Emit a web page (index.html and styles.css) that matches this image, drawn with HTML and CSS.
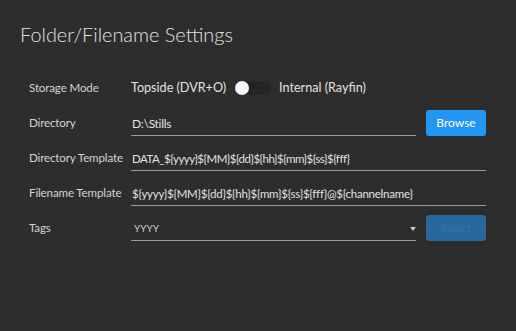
FILE: index.html
```
<!DOCTYPE html>
<html>
<head>
<meta charset="utf-8">
<link rel="stylesheet" href="styles.css">
</head>
<body>
<div class="page">
  <h1 class="title">Folder/Filename Settings</h1>
  <div class="form">
    <div class="row">
      <div class="label">Storage Mode</div>
      <div class="value mode">
        <span>Topside (DVR+O)</span>
        <span class="toggle"><span class="knob"></span></span>
        <span>Internal (Rayfin)</span>
      </div>
    </div>
    <div class="row">
      <div class="label">Directory</div>
      <div class="value">
        <div class="field short"><span class="dir">D:\Stills</span></div>
        <button class="btn">Browse</button>
      </div>
    </div>
    <div class="row">
      <div class="label">Directory Template</div>
      <div class="value">
        <div class="field wide"><span class="tpl t1">DATA_${yyyy}${MM}${dd}${hh}${mm}${ss}${fff}</span></div>
      </div>
    </div>
    <div class="row">
      <div class="label">Filename Template</div>
      <div class="value">
        <div class="field wide"><span class="tpl t2">${yyyy}${MM}${dd}${hh}${mm}${ss}${fff}@${channelname}</span></div>
      </div>
    </div>
    <div class="row">
      <div class="label">Tags</div>
      <div class="value">
        <div class="field short select"><span class="small">YYYY</span><span class="arrow"></span></div>
        <button class="btn disabled">Insert</button>
      </div>
    </div>
  </div>
</div>
</body>
</html>
```
FILE: styles.css
```
html, body {
  margin: 0;
  padding: 0;
  background: #2d2d2d;
  height: 100%;
}
body {
  font-family: Lato, "Noto Sans", sans-serif;
  color: #dcdcdc;
}
.page {
  padding: 22px 0 0 20px;
}
.title {
  margin: 0;
  font-size: 19.9px;
  font-weight: 300;
  color: #e2e2e2;
  line-height: 24px;
}
.form {
  margin-top: 24px;
  padding-left: 9px;
  display: flex;
  flex-direction: column;
}
.row {
  height: 35px;
  display: flex;
  align-items: center;
}
.label {
  width: 102px;
  font-size: 11.6px;
  letter-spacing: -0.15px;
  color: #d2d2d2;
}
.value {
  display: flex;
  align-items: center;
  font-size: 12.6px;
  color: #e2e2e2;
}
.mode {
  gap: 8px;
}
.toggle {
  width: 36px;
  height: 14px;
  border-radius: 7px;
  background: #242424;
  display: flex;
  align-items: center;
  padding-left: 1px;
}
.knob {
  width: 14px;
  height: 14px;
  border-radius: 50%;
  background: #f6f6f6;
}
.field {
  height: 26px;
  box-sizing: border-box;
  border-bottom: 1px solid #9a9a9a;
  display: flex;
  align-items: center;
  padding: 2px 2px 0 1px;
}
.dir {
  font-size: 12px;
  letter-spacing: -0.3px;
}
.tpl {
  font-size: 11.5px;
}
.t1 {
  letter-spacing: -0.5px;
}
.t2 {
  letter-spacing: -0.25px;
}
.short {
  width: 285px;
}
.wide {
  width: 355px;
}
.select {
  justify-content: space-between;
  padding-left: 3px;
  padding-right: 0;
}
.small {
  font-size: 10px;
  color: #cfcfcf;
}
.arrow {
  width: 0;
  height: 0;
  border-left: 3px solid transparent;
  border-right: 3px solid transparent;
  border-top: 4px solid #c8c8c8;
  margin-top: 2px;
}
.btn {
  margin-left: 10px;
  width: 60px;
  height: 26px;
  border: none;
  border-radius: 3px;
  background: #2196f3;
  color: #ffffff;
  font-family: Lato, "Noto Sans", sans-serif;
  font-size: 12px;
  padding: 0;
}
.btn.disabled {
  background: #28689c;
  color: #2f74aa;
}
```
